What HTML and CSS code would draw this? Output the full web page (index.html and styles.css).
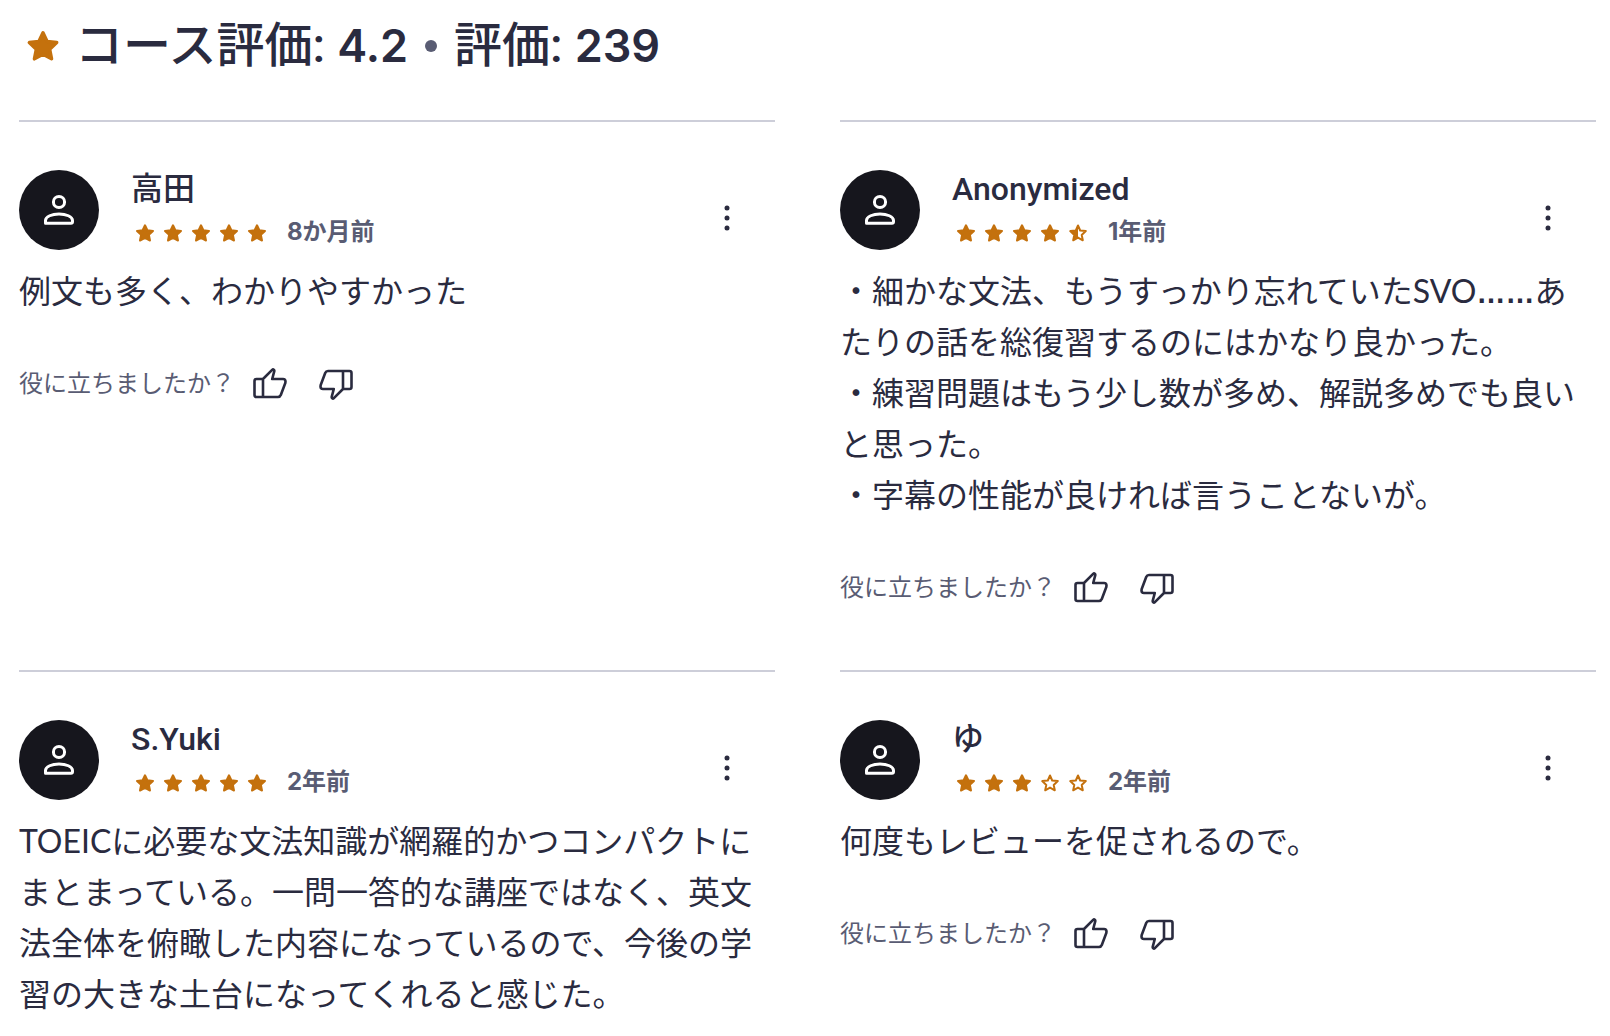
FILE: index.html
```html
<!DOCTYPE html>
<html lang="ja">
<head>
<meta charset="utf-8">
<meta name="viewport" content="width=device-width, initial-scale=1">
<title>コース評価</title>
<link rel="stylesheet" href="styles.css">
</head>
<body>
<svg class="sprite" aria-hidden="true">
  <symbol id="star" viewBox="0 0 28 28"><path d="M14 6.3 16.4 11.3 22 12 17.9 15.9 19 21.5 14 18.8 9 21.5 10.1 15.9 6 12 11.6 11.3Z" fill="currentColor" stroke="currentColor" stroke-width="2" stroke-linejoin="round"/></symbol>
  <symbol id="star-empty" viewBox="0 0 28 28"><path d="M14 6.5 16.2 11.5 21.8 12.1 17.7 15.9 18.8 21.3 14 18.6 9.2 21.3 10.3 15.9 6.2 12.1 11.8 11.5Z" fill="none" stroke="currentColor" stroke-width="2" stroke-linejoin="round"/></symbol>
  <symbol id="star-half" viewBox="0 0 28 28"><path d="M14 6.5 16.2 11.5 21.8 12.1 17.7 15.9 18.8 21.3 14 18.6 9.2 21.3 10.3 15.9 6.2 12.1 11.8 11.5Z" fill="none" stroke="currentColor" stroke-width="2" stroke-linejoin="round"/><path d="M14 6.5V18.6L9.2 21.3 10.3 15.9 6.2 12.1 11.8 11.5Z" fill="currentColor"/></symbol>
  <symbol id="person" viewBox="0 0 80 80"><circle cx="40" cy="32" r="5.6" fill="none" stroke="currentColor" stroke-width="3"/><path d="M26.5 53.2V50.5C26.5 46.5 33 44 40 44S53.5 46.5 53.5 50.5V51.7Q53.5 53.2 52 53.2H28Q26.5 53.2 26.5 51.7Z" fill="none" stroke="currentColor" stroke-width="3" stroke-linejoin="round"/></symbol>
  <symbol id="thumb" viewBox="0 0 48 48"><path d="M17 19 26.4 9.7Q27 9 27.7 9.7L28.1 10.1Q28.4 10.5 28.3 11.1L26.2 19H37Q39.5 19 39.5 21.5L39.3 23 34.8 35Q34 37 32 37H10.5Q8.5 37 8.5 35V21Q8.5 19 10.5 19ZM17 19V37" fill="none" stroke="currentColor" stroke-width="2.6" stroke-linejoin="round"/></symbol>
</svg>
<main class="reviews">
  <h2 class="summary">
    <svg class="summary-star" aria-hidden="true"><use href="#star"/></svg>
    <span>コース評価: <span class="figure">4.2</span></span>
    <span class="dot"></span>
    <span>評価: <span class="figure">239</span></span>
  </h2>
  <div class="grid">
    <article class="review">
      <header class="head">
        <svg class="avatar" aria-hidden="true"><use href="#person"/></svg>
        <div class="who">
          <h3 class="name">高田</h3>
          <div class="meta">
            <span class="stars" role="img" aria-label="5つ星"><svg><use href="#star"/></svg><svg><use href="#star"/></svg><svg><use href="#star"/></svg><svg><use href="#star"/></svg><svg><use href="#star"/></svg></span>
            <span class="date">8か月前</span>
          </div>
        </div>
        <button class="icon-button more" type="button" aria-label="その他"><svg viewBox="0 0 48 48"><circle cx="24" cy="14" r="2.5"/><circle cx="24" cy="24" r="2.5"/><circle cx="24" cy="34" r="2.5"/></svg></button>
      </header>
      <p class="text">例文も多く、わかりやすかった</p>
      <div class="helpful"><span class="question">役に立ちましたか？</span>
        <button class="icon-button" type="button" aria-label="はい"><svg><use href="#thumb"/></svg></button>
        <button class="icon-button down" type="button" aria-label="いいえ"><svg><use href="#thumb"/></svg></button>
      </div>
    </article>
    <article class="review">
      <header class="head">
        <svg class="avatar" aria-hidden="true"><use href="#person"/></svg>
        <div class="who">
          <h3 class="name">Anonymized</h3>
          <div class="meta">
            <span class="stars" role="img" aria-label="4.5つ星"><svg><use href="#star"/></svg><svg><use href="#star"/></svg><svg><use href="#star"/></svg><svg><use href="#star"/></svg><svg><use href="#star-half"/></svg></span>
            <span class="date">1年前</span>
          </div>
        </div>
        <button class="icon-button more" type="button" aria-label="その他"><svg viewBox="0 0 48 48"><circle cx="24" cy="14" r="2.5"/><circle cx="24" cy="24" r="2.5"/><circle cx="24" cy="34" r="2.5"/></svg></button>
      </header>
      <p class="text">・細かな文法、もうすっかり忘れていたSVO<span class="leader">……</span>あ<br>たりの話を総復習するのにはかなり良かった。<br>・練習問題はもう少し数が多め、解説多めでも良い<br>と思った。<br>・字幕の性能が良ければ言うことないが。</p>
      <div class="helpful"><span class="question">役に立ちましたか？</span>
        <button class="icon-button" type="button" aria-label="はい"><svg><use href="#thumb"/></svg></button>
        <button class="icon-button down" type="button" aria-label="いいえ"><svg><use href="#thumb"/></svg></button>
      </div>
    </article>
    <article class="review">
      <header class="head">
        <svg class="avatar" aria-hidden="true"><use href="#person"/></svg>
        <div class="who">
          <h3 class="name">S.Yuki</h3>
          <div class="meta">
            <span class="stars" role="img" aria-label="5つ星"><svg><use href="#star"/></svg><svg><use href="#star"/></svg><svg><use href="#star"/></svg><svg><use href="#star"/></svg><svg><use href="#star"/></svg></span>
            <span class="date">2年前</span>
          </div>
        </div>
        <button class="icon-button more" type="button" aria-label="その他"><svg viewBox="0 0 48 48"><circle cx="24" cy="14" r="2.5"/><circle cx="24" cy="24" r="2.5"/><circle cx="24" cy="34" r="2.5"/></svg></button>
      </header>
      <p class="text">TOEICに必要な文法知識が網羅的かつコンパクトに<br>まとまっている。一問一答的な講座ではなく、英文<br>法全体を俯瞰した内容になっているので、今後の学<br>習の大きな土台になってくれると感じた。</p>
    </article>
    <article class="review">
      <header class="head">
        <svg class="avatar" aria-hidden="true"><use href="#person"/></svg>
        <div class="who">
          <h3 class="name">ゆ</h3>
          <div class="meta">
            <span class="stars" role="img" aria-label="3つ星"><svg><use href="#star"/></svg><svg><use href="#star"/></svg><svg><use href="#star"/></svg><svg><use href="#star-empty"/></svg><svg><use href="#star-empty"/></svg></span>
            <span class="date">2年前</span>
          </div>
        </div>
        <button class="icon-button more" type="button" aria-label="その他"><svg viewBox="0 0 48 48"><circle cx="24" cy="14" r="2.5"/><circle cx="24" cy="24" r="2.5"/><circle cx="24" cy="34" r="2.5"/></svg></button>
      </header>
      <p class="text">何度もレビューを促されるので。</p>
      <div class="helpful"><span class="question">役に立ちましたか？</span>
        <button class="icon-button" type="button" aria-label="はい"><svg><use href="#thumb"/></svg></button>
        <button class="icon-button down" type="button" aria-label="いいえ"><svg><use href="#thumb"/></svg></button>
      </div>
    </article>
  </div>
</main>
</body>
</html>
```
FILE: styles.css
```css
* { box-sizing: border-box; }
body {
  margin: 0;
  background: #fff;
  color: #2a2b3f;
  font-family: Roboto, "Noto Sans CJK JP", sans-serif;
  font-size: 32px;
  line-height: 51px;
}
h2, h3, p { margin: 0; }
.sprite { display: none; }
.reviews { padding: 14px 14px 0 19px; }
.summary {
  display: flex;
  align-items: center;
  font-size: 48px;
  font-weight: 500;
  line-height: 64px;
}
.summary-star { width: 48px; height: 48px; margin-right: 8px; color: #c4710d; }
.figure { font-family: Inter, sans-serif; font-size: 45px; font-weight: 600; line-height: 1; }
.dot {
  width: 12px;
  height: 12px;
  margin: 0 17px;
  border-radius: 50%;
  background: #595c73;
}
.grid {
  display: grid;
  grid-template-columns: 1fr 1fr;
  column-gap: 65px;
  row-gap: 58px;
  padding-top: 42px;
}
.review { border-top: 2px solid #cdced9; padding-top: 48px; }
.head { display: flex; align-items: flex-start; }
.avatar {
  width: 80px;
  height: 80px;
  margin-right: 32px;
  border-radius: 50%;
  background: #16161d;
  color: #fff;
}
.who { flex: 1; }
.name { font-size: 32px; font-weight: 500; line-height: 38px; }
.meta { display: flex; align-items: center; gap: 16px; padding-top: 8px; }
.stars { display: flex; padding-top: 2px; color: #c4710d; }
.stars svg { width: 28px; height: 28px; }
.date {
  color: #595c73;
  font-family: Inter, "Noto Sans CJK JP", sans-serif;
  font-size: 24px;
  font-weight: 700;
  line-height: 32px;
}
.icon-button {
  width: 48px;
  height: 48px;
  padding: 0;
  border: 0;
  background: none;
  color: #2a2b3f;
  cursor: pointer;
}
.icon-button svg { display: block; width: 48px; height: 48px; fill: currentColor; }
.more { margin: 24px 24px 0 0; }
.down svg { transform: rotate(180deg); }
.text { padding-top: 15px; font-family: Lato, "Noto Sans CJK JP", sans-serif; }
.leader { font-family: "Liberation Sans", sans-serif; font-size: 29px; font-weight: 700; line-height: 1; }
.helpful { display: flex; align-items: center; gap: 18px; padding-top: 44px; }
.question { margin-right: -7px; color: #595c73; font-size: 24px; line-height: 32px; }
```
